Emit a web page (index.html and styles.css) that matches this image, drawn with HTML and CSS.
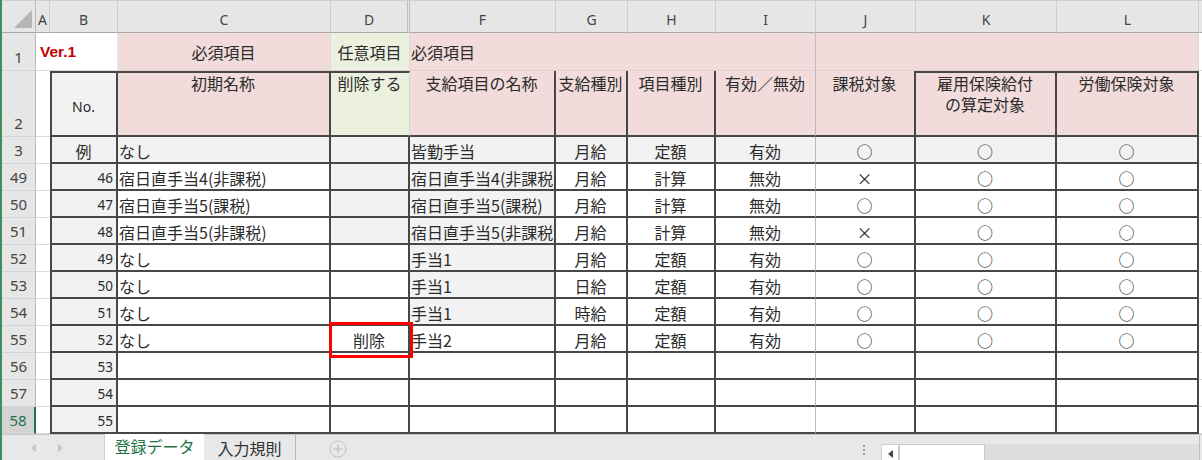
FILE: index.html
```html
<!DOCTYPE html>
<html lang="ja">
<head>
    <meta charset="UTF-8">
    <meta name="viewport" content="width=device-width, initial-scale=1.0">
    <title>登録データ</title>
    <link rel="stylesheet" href="styles.css">
</head>
<body>
<div class="book">
    <div class="sheet">
        <!-- column letters (E is hidden) -->
        <div class="ch corner"><span class="tri"></span></div>
        <div class="ch">A</div>
        <div class="ch">B</div>
        <div class="ch">C</div>
        <div class="ch hidden-next">D</div>
        <div class="ch">F</div>
        <div class="ch">G</div>
        <div class="ch">H</div>
        <div class="ch">I</div>
        <div class="ch">J</div>
        <div class="ch">K</div>
        <div class="ch">L</div>
        <div class="ch x"></div>

        <!-- row 1: group captions -->
        <div class="rh">1</div>
        <div class="c r1 ver span2">Ver.1</div>
        <div class="c r1 pk mid">必須項目</div>
        <div class="c r1 gr mid">任意項目</div>
        <div class="c r1 pk span4">必須項目</div>
        <div class="c r1 pk span3 soft-left"></div>
        <div class="c x"></div>

        <!-- row 2: field names -->
        <div class="rh">2</div>
        <div class="c a"></div>
        <div class="c t tp lft gy mid no">No.</div>
        <div class="c t tp pk mid top">初期名称</div>
        <div class="c t tp gr mid top open-right">削除する</div>
        <div class="c t pk mid top">支給項目の名称</div>
        <div class="c t pk mid top">支給種別</div>
        <div class="c t pk mid top">項目種別</div>
        <div class="c t soft pk mid top">有効／無効</div>
        <div class="c t pk mid top">課税対象</div>
        <div class="c t tp pk mid top"><span class="two"><span>雇用保険給付</span><span>の算定対象</span></span></div>
        <div class="c t tp pk mid top">労働保険対象</div>
        <div class="c x"></div>

        <!-- row 3: sample -->
        <div class="rh">3</div>
        <div class="c a"></div>
        <div class="c t lft gy mid">例</div>
        <div class="c t gy">なし</div>
        <div class="c t gy"></div>
        <div class="c t gy">皆勤手当</div>
        <div class="c t gy mid">月給</div>
        <div class="c t gy mid">定額</div>
        <div class="c t soft gy mid">有効</div>
        <div class="c t gy mid">○</div>
        <div class="c t gy mid">○</div>
        <div class="c t gy mid">○</div>
        <div class="c x"></div>

        <div class="rh">49</div>
        <div class="c a"></div>
        <div class="c t lft gy rgt num">46</div>
        <div class="c t">宿日直手当4(非課税)</div>
        <div class="c t gy"></div>
        <div class="c t gy">宿日直手当4(非課税)</div>
        <div class="c t mid">月給</div>
        <div class="c t mid">計算</div>
        <div class="c t soft mid">無効</div>
        <div class="c t mid">×</div>
        <div class="c t mid">○</div>
        <div class="c t mid">○</div>
        <div class="c x"></div>

        <div class="rh">50</div>
        <div class="c a"></div>
        <div class="c t lft gy rgt num">47</div>
        <div class="c t">宿日直手当5(課税)</div>
        <div class="c t gy"></div>
        <div class="c t gy">宿日直手当5(課税)</div>
        <div class="c t mid">月給</div>
        <div class="c t mid">計算</div>
        <div class="c t soft mid">無効</div>
        <div class="c t mid">○</div>
        <div class="c t mid">○</div>
        <div class="c t mid">○</div>
        <div class="c x"></div>

        <div class="rh">51</div>
        <div class="c a"></div>
        <div class="c t lft gy rgt num">48</div>
        <div class="c t">宿日直手当5(非課税)</div>
        <div class="c t gy"></div>
        <div class="c t gy">宿日直手当5(非課税)</div>
        <div class="c t mid">月給</div>
        <div class="c t mid">計算</div>
        <div class="c t soft mid">無効</div>
        <div class="c t mid">×</div>
        <div class="c t mid">○</div>
        <div class="c t mid">○</div>
        <div class="c x"></div>

        <div class="rh">52</div>
        <div class="c a"></div>
        <div class="c t lft gy rgt num">49</div>
        <div class="c t">なし</div>
        <div class="c t"></div>
        <div class="c t gy">手当1</div>
        <div class="c t mid">月給</div>
        <div class="c t mid">定額</div>
        <div class="c t soft mid">有効</div>
        <div class="c t mid">○</div>
        <div class="c t mid">○</div>
        <div class="c t mid">○</div>
        <div class="c x"></div>

        <div class="rh">53</div>
        <div class="c a"></div>
        <div class="c t lft gy rgt num">50</div>
        <div class="c t">なし</div>
        <div class="c t"></div>
        <div class="c t gy">手当1</div>
        <div class="c t mid">日給</div>
        <div class="c t mid">定額</div>
        <div class="c t soft mid">有効</div>
        <div class="c t mid">○</div>
        <div class="c t mid">○</div>
        <div class="c t mid">○</div>
        <div class="c x"></div>

        <div class="rh">54</div>
        <div class="c a"></div>
        <div class="c t lft gy rgt num">51</div>
        <div class="c t">なし</div>
        <div class="c t"></div>
        <div class="c t gy">手当1</div>
        <div class="c t mid">時給</div>
        <div class="c t mid">定額</div>
        <div class="c t soft mid">有効</div>
        <div class="c t mid">○</div>
        <div class="c t mid">○</div>
        <div class="c t mid">○</div>
        <div class="c x"></div>

        <div class="rh">55</div>
        <div class="c a"></div>
        <div class="c t lft gy rgt num">52</div>
        <div class="c t">なし</div>
        <div class="c t mid del">削除<span class="mark"></span></div>
        <div class="c t">手当2</div>
        <div class="c t mid">月給</div>
        <div class="c t mid">定額</div>
        <div class="c t soft mid">有効</div>
        <div class="c t mid">○</div>
        <div class="c t mid">○</div>
        <div class="c t mid">○</div>
        <div class="c x"></div>

        <div class="rh">56</div>
        <div class="c a"></div>
        <div class="c t lft gy rgt num">53</div>
        <div class="c t"></div>
        <div class="c t"></div>
        <div class="c t"></div>
        <div class="c t"></div>
        <div class="c t"></div>
        <div class="c t soft"></div>
        <div class="c t"></div>
        <div class="c t"></div>
        <div class="c t"></div>
        <div class="c x"></div>

        <div class="rh">57</div>
        <div class="c a"></div>
        <div class="c t lft gy rgt num">54</div>
        <div class="c t"></div>
        <div class="c t"></div>
        <div class="c t"></div>
        <div class="c t"></div>
        <div class="c t"></div>
        <div class="c t soft"></div>
        <div class="c t"></div>
        <div class="c t"></div>
        <div class="c t"></div>
        <div class="c x"></div>

        <div class="rh sel">58</div>
        <div class="c a"></div>
        <div class="c t lft gy rgt num">55</div>
        <div class="c t"></div>
        <div class="c t"></div>
        <div class="c t"></div>
        <div class="c t"></div>
        <div class="c t"></div>
        <div class="c t soft"></div>
        <div class="c t"></div>
        <div class="c t"></div>
        <div class="c t"></div>
        <div class="c x"></div>
    </div>

    <!-- sheet tabs and horizontal scroll -->
    <div class="tabs">
        <div class="nav">
            <span class="arr arr-l"></span>
            <span class="arr arr-r"></span>
        </div>
        <div class="tab on">登録データ</div>
        <div class="tab off">入力規則</div>
        <svg class="add" width="18" height="18" viewBox="0 0 18 18">
            <circle cx="9" cy="9" r="8" fill="none" stroke="#c2c2c2" stroke-width="1"/>
            <path d="M9 4.5v9M4.5 9h9" stroke="#bdbdbd" stroke-width="1.2"/>
        </svg>
        <div class="hscroll">
            <div class="dots"><i></i><i></i><i></i></div>
            <div class="sbtn"><span class="back"></span></div>
            <div class="thumb"></div>
            <div class="track"></div>
            <div class="edge"></div>
        </div>
    </div>
</div>
</body>
</html>
```

FILE: styles.css
```css
:root {
    --line: #dadada;
    --dark: #474747;
    --head: #e6e6e6;
    --pink: #f2dcdb;
    --green: #ebf1de;
    --shade: #f2f2f2;
    --excel: #217346;
}
* {
    margin: 0;
    padding: 0;
    box-sizing: border-box;
}
body {
    width: 1202px;
    height: 460px;
    overflow: hidden;
    background: #fff;
    color: #2b2b2b;
    font-family: "Noto Sans CJK JP", "Noto Sans", sans-serif;
}
.book {
    height: 460px;
    border-left: 2px solid #3f8d5e;
    display: flex;
    flex-direction: column;
}
.sheet {
    display: grid;
    grid-template-columns: 34px 14px 68px 213px 79px 146px 72px 88px 100px 100px 141px 142px 1fr;
    grid-template-rows: 33px 38px 66px repeat(11, 27px);
}

/* headers */
.ch {
    display: flex;
    align-items: center;
    justify-content: center;
    padding-top: 5px;
    background: var(--head);
    border-top: 1px solid #cfcfcf;
    border-right: 1px solid #cdcdcd;
    border-bottom: 1px solid #a9a9a9;
    font-family: "Noto Sans", sans-serif;
    font-size: 14px;
    color: #444;
}
.ch.hidden-next {
    border-right: 3px double #bdbdbd;
}
.ch.x {
    border-right: none;
}
.corner {
    align-items: flex-end;
    justify-content: flex-end;
    padding: 0 3px 4px 0;
    border-right-color: #b9b9b9;
}
.tri {
    width: 0;
    height: 0;
    border-left: 18px solid transparent;
    border-bottom: 18px solid #b5b5b5;
}
.rh {
    display: flex;
    align-items: flex-end;
    justify-content: center;
    padding-bottom: 3px;
    background: var(--head);
    border-right: 1px solid #b9b9b9;
    border-bottom: 1px solid #d3d3d3;
    font-family: "Noto Sans", sans-serif;
    font-size: 15px;
    line-height: 20px;
    color: #444;
}
.rh.sel {
    background: #d3d3d3;
    color: var(--excel);
    border-right: 2px solid var(--excel);
}

/* cells */
.c {
    display: flex;
    align-items: flex-end;
    padding: 0 2px 1px 1px;
    border-right: 1px solid var(--line);
    border-bottom: 1px solid var(--line);
    font-size: 16px;
    line-height: 20px;
    white-space: nowrap;
    overflow: hidden;
}
.c.x { border-right: none; }
.c.a { border-right: none; }
.r1 {
    align-items: center;
    padding-bottom: 0;
    border-bottom-color: #e4cdcc;
}
.ver {
    padding-left: 4px;
    border-bottom-color: var(--line);
    border-right-color: #e6e6e6;
    font-family: "Liberation Sans", sans-serif;
    font-weight: bold;
    font-size: 15.5px;
    color: #c00000;
}
.span2 { grid-column: span 2; }
.span3 { grid-column: span 3; }
.span4 { grid-column: span 4; border-right-color: #bdbdbd; }

.t {
    border-right: 2px solid var(--dark);
    border-bottom: 2px solid var(--dark);
}
.t.soft { border-right: 1px solid #b9b9b9; }
.t.open-right { border-right: 1px solid #cfd6c2; }
.lft { border-left: 2px solid var(--dark); }
.tp { border-top: 2px solid var(--dark); }

.mid { justify-content: center; }
.rgt { justify-content: flex-end; }
.top {
    align-items: flex-start;
    padding-top: 2px;
}
.tp.top { padding-top: 0; }
.two {
    display: flex;
    flex-direction: column;
    align-items: center;
    gap: 1px;
}

.gy { background: var(--shade); }
.pk { background: var(--pink); }
.gr { background: var(--green); }

.num {
    font-family: "Noto Sans", sans-serif;
    font-size: 13.5px;
    padding-right: 3px;
}
.no {
    align-items: center;
    padding-top: 6px;
    font-family: "Noto Sans", sans-serif;
    font-size: 14px;
}

/* red frame drawn round the delete flag */
.del {
    position: relative;
    overflow: visible;
}
.mark {
    position: absolute;
    left: -2px;
    right: -5px;
    top: -4px;
    bottom: -7px;
    border: 3px solid #ff0000;
    z-index: 2;
}

/* tab strip */
.tabs {
    flex: 1;
    display: flex;
    align-items: stretch;
    background: #e8e8e8;
    border-top: 1px solid #c6c6c6;
}
.nav {
    width: 102px;
    display: flex;
    align-items: center;
    gap: 22px;
    padding: 0 0 3px 29px;
}
.arr {
    width: 0;
    height: 0;
    border-top: 4px solid transparent;
    border-bottom: 4px solid transparent;
}
.arr-l { border-right: 5px solid #c4c4c4; }
.arr-r { border-left: 5px solid #c4c4c4; }
.tab {
    display: flex;
    align-items: center;
    justify-content: center;
    padding-bottom: 4px;
    font-size: 16px;
}
.tab.on {
    width: 100px;
    margin-top: -1px;
    background: #fff;
    color: var(--excel);
    border-left: 1px solid #cfcfcf;
    border-bottom: 2px solid var(--excel);
}
.tab.off {
    width: 92px;
    color: #333;
    border-right: 1px solid #b7b7b7;
}
.add {
    align-self: center;
    margin: 0 0 2px 33px;
}
.hscroll {
    margin-left: auto;
    display: flex;
    align-items: flex-end;
}
.dots {
    width: 12px;
    margin-right: 11px;
    align-self: center;
    display: flex;
    flex-direction: column;
    align-items: center;
    gap: 2px;
}
.dots i {
    width: 2px;
    height: 2px;
    background: #9b9b9b;
}
.sbtn {
    width: 18px;
    height: 20px;
    display: flex;
    align-items: center;
    justify-content: center;
    background: #fff;
    border: 1px solid #d0d0d0;
}
.back {
    width: 0;
    height: 0;
    border-top: 4px solid transparent;
    border-bottom: 4px solid transparent;
    border-right: 5px solid #444;
}
.thumb {
    width: 86px;
    height: 20px;
    background: #fff;
    border: 1px solid #c9c9c9;
}
.track {
    width: 214px;
    height: 20px;
    background: #dddddd;
}
.edge {
    width: 3px;
    height: 100%;
    border-left: 1px solid #bdbdbd;
}
```
